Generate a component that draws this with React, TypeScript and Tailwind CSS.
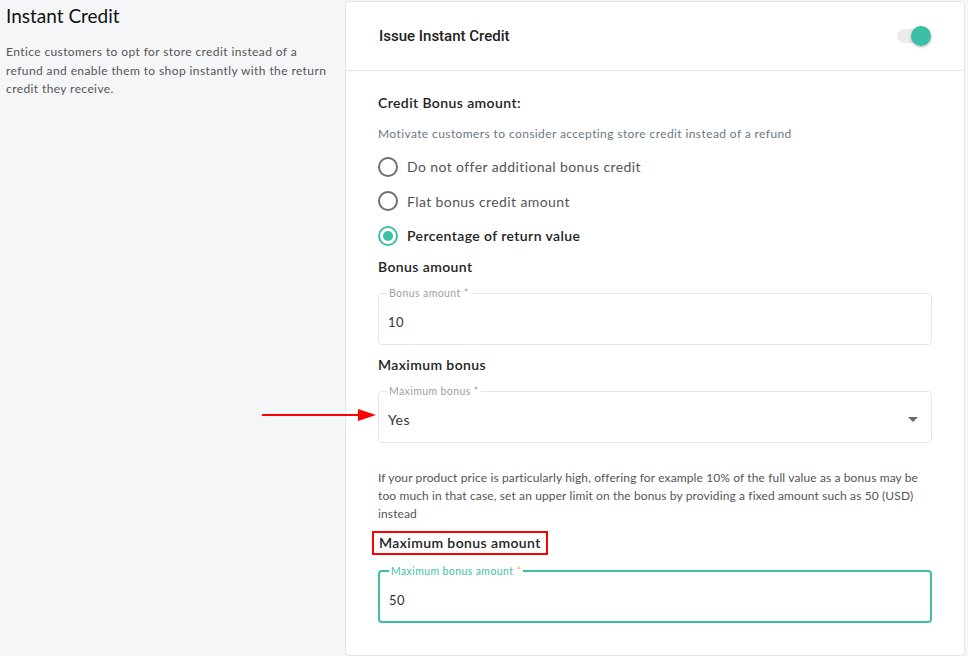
import { useState } from "react";

const font = "font-['Lato','Open_Sans',sans-serif] tracking-[0.025em]";

const options = [
  "Do not offer additional bonus credit",
  "Flat bonus credit amount",
  "Percentage of return value",
];

function Outlined({
  label,
  value,
  focused,
  select,
}: {
  label: string;
  value: string;
  focused?: boolean;
  select?: boolean;
}) {
  return (
    <fieldset
      className={
        "h-[57px] rounded-[4px] px-[8px] " +
        (focused ? "border-2 border-[#3dbfa7] px-[7px]" : "border border-[#e4e6ea]")
      }
    >
      <legend
        className={
          "px-[2px] text-[10.5px] leading-[10px] " + (focused ? "text-[#3dbfa7] ml-[1px]" : "text-[#9aa1a8]")
        }
      >
        {label} <span className={focused ? "text-[#f5c542]" : ""}>*</span>
      </legend>
      <div
        className={
          "flex h-[46px] items-center justify-between pl-[1px] pr-[5px] " + (select ? "" : "pt-[4px]")
        }
      >
        <span className={select ? "text-[14px] text-[#333]" : "text-[13px] text-[#333]"}>{value}</span>
        {select && (
          <svg width="10" height="5" viewBox="0 0 10 5">
            <path d="M0 0 L10 0 L5 5 Z" fill="#6b6b6b" />
          </svg>
        )}
      </div>
    </fieldset>
  );
}

export default function App() {
  const [choice, setChoice] = useState(2);
  const [on, setOn] = useState(true);

  return (
    <div className={`${font} relative flex h-[656px] w-[968px] overflow-hidden bg-[#f5f6f8] text-[#222]`}>
      {/* Left: section intro */}
      <div className="w-[345px] shrink-0 px-[6px] pt-[4px]">
        <h1 className="text-[19px] leading-[24px] tracking-normal text-[#111]">Instant Credit</h1>
        <p className="mt-[15px] w-[330px] text-[12px] leading-[18.5px] text-[#555]">
          Entice customers to opt for store credit instead of a refund and enable them to shop instantly with the return
          credit they receive.
        </p>
      </div>

      {/* Right: settings card */}
      <div className="mr-[3px] mt-[1px] flex-1 rounded-[4px] border border-[#e3e6ea] bg-white">
        <div className="flex h-[69px] items-center justify-between border-b border-[#e3e6ea] pl-[33px] pr-[31px]">
          <span className="font-['Roboto',sans-serif] text-[15px] font-medium tracking-normal text-[#222]">
            Issue Instant Credit
          </span>
          <button onClick={() => setOn(!on)} className="relative h-[20px] w-[38px]" aria-label="Toggle">
            <span className="absolute left-[2px] top-[3px] h-[14px] w-[28px] rounded-full bg-[#ececec]" />
            <span
              className={
                "absolute top-0 h-[20px] w-[20px] rounded-full shadow-[0_1px_3px_rgba(0,0,0,0.3)] " +
                (on ? "left-[16px] bg-[#3dbfa7]" : "left-0 bg-white")
              }
            />
          </button>
        </div>

        <div className="px-[32px] pt-[23px]">
          <div className="text-[14px] font-semibold leading-[18px] text-[#222]">Credit Bonus amount:</div>
          <p className="mt-[14px] text-[12px] leading-[16px] text-[#6b7785]">
            Motivate customers to consider accepting store credit instead of a refund
          </p>

          <div className="mt-[14px] flex flex-col gap-[13.5px]">
            {options.map((o, i) => (
              <label key={i} className="flex h-[21px] cursor-pointer items-center gap-[9px]" onClick={() => setChoice(i)}>
                <span
                  className={
                    "flex h-[20px] w-[20px] items-center justify-center rounded-full border-2 " +
                    (choice === i ? "border-[#3dbfa7]" : "border-[#6e6e6e]")
                  }
                >
                  {choice === i && <span className="h-[10px] w-[10px] rounded-full bg-[#3dbfa7]" />}
                </span>
                <span className={"text-[14px] " + (choice === i ? "font-semibold text-[#222]" : "text-[#555]")}>{o}</span>
              </label>
            ))}
          </div>

          <div className="mt-[12px] text-[14px] font-semibold leading-[18px]">Bonus amount</div>
          <div className="mt-[12px]">
            <Outlined label="Bonus amount" value="10" />
          </div>

          <div className="mt-[11px] text-[14px] font-semibold leading-[18px]">Maximum bonus</div>
          <div className="mt-[12px]">
            <Outlined label="Maximum bonus" value="Yes" select />
          </div>

          <p className="mt-[26px] text-[12px] leading-[18px] tracking-[0.01em] text-[#555]">
            If your product price is particularly high, offering for example 10% of the full value as a bonus may be too
            much in that case, set an upper limit on the bonus by providing a fixed amount such as 50 (USD) instead
          </p>

          <div className="-ml-[6px] mt-[8px] inline-block border-2 border-[#ff0000] px-[5px] py-[1px] text-[14px] font-semibold leading-[18px]">
            Maximum bonus amount
          </div>
          <div className="mt-[11px]">
            <Outlined label="Maximum bonus amount" value="50" focused />
          </div>
        </div>
      </div>

      {/* annotation arrow */}
      <svg className="absolute left-[260px] top-[407px]" width="120" height="16" viewBox="0 0 120 16">
        <line x1="2" y1="8" x2="102" y2="8" stroke="#ff0000" strokeWidth="2" />
        <path d="M98 2 L116 8 L98 14 Z" fill="#ff0000" />
      </svg>
    </div>
  );
}
